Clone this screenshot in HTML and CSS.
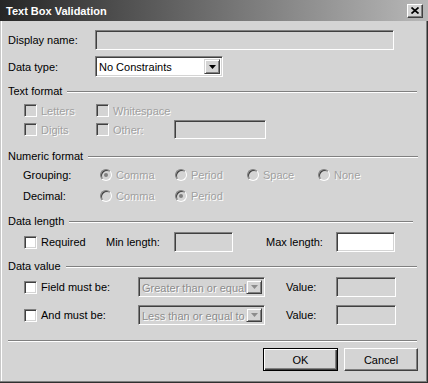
FILE: index.html
```html
<!DOCTYPE html>
<html lang="en">
<head>
  <meta charset="UTF-8">
  <title>Text Box Validation</title>
  <link rel="stylesheet" href="styles.css">
</head>
<body>
  <div class="window">
    <div class="titlebar">
      <span class="title">Text Box Validation</span>
      <span class="close">
        <svg width="8" height="7" viewBox="0 0 8 7"><path d="M0.5 0.5 L7.5 6.5 M7.5 0.5 L0.5 6.5" stroke="#000" stroke-width="1.7"/></svg>
      </span>
    </div>

    <div class="content">
      <div class="row row-display">
        <span class="label-main">Display name:</span>
        <div class="field name-field"></div>
      </div>
      <div class="row row-type">
        <span class="label-main">Data type:</span>
        <div class="combo type-combo">
          <span class="combo-text">No Constraints</span>
          <span class="combo-btn"><svg width="7" height="4" viewBox="0 0 7 4"><polygon points="0,0 7,0 3.5,4" fill="#000"/></svg></span>
        </div>
      </div>

      <div class="group-title">Text format</div>
      <div class="text-grid">
        <span class="check-item disabled"><span class="check"></span>Letters</span>
        <span class="check-item disabled"><span class="check"></span>Whitespace</span>
        <span></span>
        <span class="check-item disabled"><span class="check"></span>Digits</span>
        <span class="check-item disabled"><span class="check"></span>Other:</span>
        <div class="field other-field"></div>
      </div>

      <div class="group-title numeric">Numeric format</div>
      <div class="numeric-grid">
        <span>Grouping:</span>
        <span class="radio-item disabled"><span class="radio checked"></span>Comma</span>
        <span class="radio-item disabled"><span class="radio"></span>Period</span>
        <span class="radio-item disabled"><span class="radio"></span>Space</span>
        <span class="radio-item disabled"><span class="radio"></span>None</span>
        <span>Decimal:</span>
        <span class="radio-item disabled"><span class="radio"></span>Comma</span>
        <span class="radio-item disabled"><span class="radio checked"></span>Period</span>
        <span></span>
        <span></span>
      </div>

      <div class="group-title length">Data length</div>
      <div class="length-grid">
        <span class="check-item"><span class="check white"></span>Required</span>
        <span>Min length:</span>
        <div class="field short-field"></div>
        <span>Max length:</span>
        <div class="field short-field white"></div>
      </div>

      <div class="group-title">Data value</div>
      <div class="value-grid">
        <span class="check-item"><span class="check white"></span>Field must be:</span>
        <div class="combo value-combo disabled">
          <span class="combo-text">Greater than or equal</span>
          <span class="combo-btn"><svg width="7" height="4" viewBox="0 0 7 4"><polygon points="0,0 7,0 3.5,4" fill="#8c8c8c"/></svg></span>
        </div>
        <span>Value:</span>
        <div class="field value-field"></div>
      </div>
      <div class="value-grid second">
        <span class="check-item"><span class="check white"></span>And must be:</span>
        <div class="combo value-combo disabled">
          <span class="combo-text">Less than or equal to</span>
          <span class="combo-btn"><svg width="7" height="4" viewBox="0 0 7 4"><polygon points="0,0 7,0 3.5,4" fill="#8c8c8c"/></svg></span>
        </div>
        <span>Value:</span>
        <div class="field value-field"></div>
      </div>

      <div class="separator"></div>

      <div class="buttons">
        <button class="btn default">OK</button>
        <button class="btn cancel">Cancel</button>
      </div>
    </div>
  </div>
</body>
</html>
```

FILE: styles.css
```css
body {
  margin: 0;
  background: #d4d4d4;
  font-family: "Liberation Sans", Arial, sans-serif;
  font-size: 11px;
  color: #000;
}
.window {
  width: 428px;
  height: 383px;
  box-sizing: border-box;
  background: #d4d4d4;
  box-shadow: inset -1px -1px #303030, inset -2px -2px #808080, inset 1px 0 #c8c8c8, inset 2px 0 #fff;
}
.titlebar {
  height: 21px;
  display: flex;
  align-items: center;
  justify-content: space-between;
  padding: 0 5px 0 6px;
  background: linear-gradient(to right, #262626, #b8b8b8);
}
.title {
  color: #fff;
  font-weight: bold;
  font-size: 11px;
}
.close {
  width: 16px;
  height: 14px;
  box-sizing: border-box;
  display: flex;
  align-items: center;
  justify-content: center;
  background: #d4d4d4;
  border: 1px solid;
  border-color: #fff #404040 #404040 #fff;
  box-shadow: inset -1px -1px #808080;
}
.content {
  padding: 0 10px 0 8px;
}
.row {
  display: flex;
  align-items: center;
}
.row-display {
  margin-top: 9px;
}
.row-type {
  margin-top: 6px;
}
.label-main {
  width: 87px;
}

/* sunken edit boxes */
.field {
  height: 20px;
  box-sizing: border-box;
  border: 1px solid;
  border-color: #808080 #fff #fff #808080;
  box-shadow: inset 1px 1px #404040, inset -1px -1px #d4d4d4;
  background: #d4d4d4;
}
.field.white {
  background: #fff;
}
.name-field {
  width: 299px;
}
.other-field {
  width: 92px;
  height: 19px;
}
.short-field {
  width: 59px;
}
.value-field {
  width: 60px;
}

/* drop downs */
.combo {
  display: flex;
  height: 21px;
  box-sizing: border-box;
  border: 1px solid;
  border-color: #808080 #fff #fff #808080;
  box-shadow: inset 1px 1px #404040, inset -1px -1px #d4d4d4;
  padding: 2px;
  background: #fff;
}
.combo-text {
  flex: 1;
  line-height: 17px;
  padding-left: 1px;
  white-space: nowrap;
  overflow: hidden;
}
.combo-btn {
  width: 16px;
  box-sizing: border-box;
  display: flex;
  align-items: center;
  justify-content: center;
  background: #d4d4d4;
  border: 1px solid;
  border-color: #d4d4d4 #404040 #404040 #d4d4d4;
  box-shadow: inset 1px 1px #fff, inset -1px -1px #808080;
}
.type-combo {
  width: 128px;
}
.combo.disabled {
  background: #d4d4d4;
  color: #8c8c8c;
}
.value-combo {
  width: 127px;
  height: 20px;
}
.value-combo .combo-text {
  line-height: 16px;
}

/* group headings */
.group-title {
  display: flex;
  align-items: center;
  height: 13px;
  line-height: 13px;
  margin-top: 8px;
  margin-right: 1px;
}
.group-title::after {
  content: '';
  flex: 1;
  margin-left: 5px;
  border-top: 1px solid #808080;
  border-bottom: 1px solid #fff;
}
.group-title.numeric {
  margin-top: 11px;
  margin-right: 0;
}
.group-title.length {
  margin-top: 9px;
  margin-right: 5px;
}

/* checkboxes and radios */
.check-item, .radio-item {
  display: flex;
  align-items: center;
  gap: 4px;
  white-space: nowrap;
}
.disabled {
  color: #a0a0a0;
  text-shadow: 1px 1px #fff;
}
.check {
  width: 13px;
  height: 13px;
  box-sizing: border-box;
  border: 1px solid;
  border-color: #808080 #fff #fff #808080;
  box-shadow: inset 1px 1px #404040, inset -1px -1px #d4d4d4;
  background: #d4d4d4;
}
.check.white {
  background: #fff;
}
.radio {
  width: 12px;
  height: 12px;
  box-sizing: border-box;
  border-radius: 50%;
  border: 1px solid;
  border-color: #808080 #fff #fff #808080;
  box-shadow: inset 1px 1px #404040;
  background: #d4d4d4;
  display: flex;
  align-items: center;
  justify-content: center;
}
.radio.checked::after {
  content: '';
  width: 4px;
  height: 4px;
  border-radius: 50%;
  background: #808080;
}

.text-grid {
  display: grid;
  grid-template-columns: 72px 78px 92px;
  grid-auto-rows: 19px;
  align-items: center;
  margin: 3px 0 0 16px;
}
.numeric-grid {
  display: grid;
  grid-template-columns: 77px 75px 72px 71px auto;
  grid-auto-rows: 20px;
  row-gap: 1px;
  align-items: center;
  margin: 2px 0 0 15px;
}
.length-grid {
  display: grid;
  grid-template-columns: 82px 68px 92px 70px 59px;
  height: 20px;
  align-items: center;
  margin: 4px 0 0 16px;
}
.value-grid {
  display: grid;
  grid-template-columns: 114px 148px 50px 60px;
  height: 20px;
  align-items: center;
  margin: 4px 0 0 16px;
}
.value-grid.second {
  margin-top: 8px;
}

.separator {
  margin: 15px 1px 0 0;
  border-top: 1px solid #808080;
  border-bottom: 1px solid #fff;
}

/* buttons */
.buttons {
  display: flex;
  justify-content: flex-end;
  gap: 6px;
  margin-top: 6px;
}
.btn {
  height: 23px;
  box-sizing: border-box;
  font-family: inherit;
  font-size: 11px;
  color: #000;
  background: #d4d4d4;
  border: 1px solid;
  border-color: #fff #404040 #404040 #fff;
  box-shadow: inset -1px -1px #808080;
  padding: 0;
}
.btn.default {
  width: 75px;
  border-color: #000;
  box-shadow: inset 1px 1px #fff, inset -1px -1px #404040, inset -2px -2px #808080;
}
.btn.cancel {
  width: 74px;
}
```
